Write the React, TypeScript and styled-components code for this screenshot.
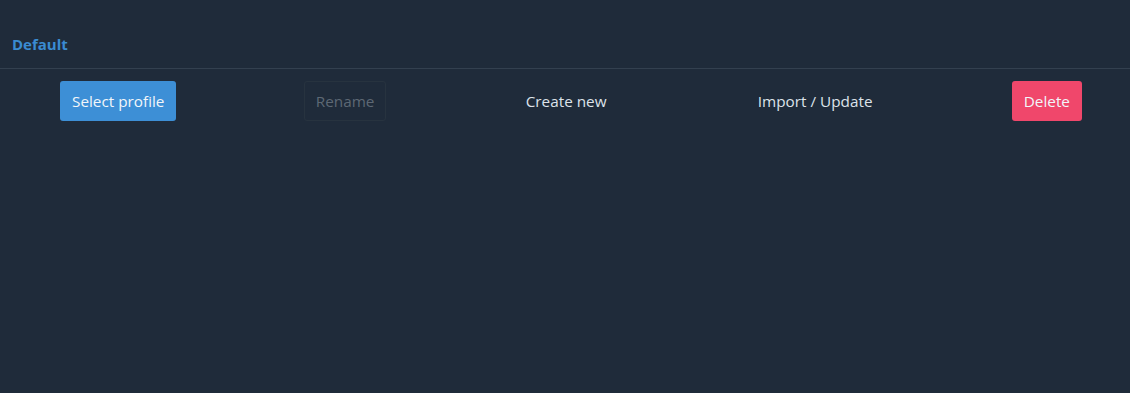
import React from "react";
import styled, { createGlobalStyle } from "styled-components";

const Global = createGlobalStyle`
  html, body { margin: 0; padding: 0; background: #1f2b3a; }
  body { font-family: "Open Sans", "Noto Sans", sans-serif; }
`;

const Page = styled.div`
  width: 1130px;
  height: 393px;
  background: #1f2b3a;
  display: flex;
  flex-direction: column;
`;

const Header = styled.div`
  height: 69px;
  box-sizing: border-box;
  border-bottom: 1px solid #33404f;
  display: flex;
  align-items: flex-end;
  padding: 0 0 15px 12px;
`;

const Title = styled.div`
  color: #3a8bd2;
  font-weight: 700;
  font-size: 15px;
  line-height: 18px;
`;

const Toolbar = styled.div`
  display: flex;
  justify-content: space-between;
  align-items: center;
  padding: 12px 48px 0 60px;
`;

type Variant = "primary" | "disabled" | "plain" | "danger";

const Button = styled.button<{ $variant: Variant }>`
  height: 40px;
  box-sizing: border-box;
  border-radius: 3px;
  font-family: "Open Sans", "Noto Sans", sans-serif;
  font-size: 15.3px;
  padding: 0 11px;
  cursor: pointer;
  border: 1px solid
    ${(p) => (p.$variant === "disabled" ? "#27333f" : "transparent")};
  background: ${(p) =>
    p.$variant === "primary"
      ? "#3d8fd6"
      : p.$variant === "danger"
      ? "#f0476b"
      : "transparent"};
  color: ${(p) =>
    p.$variant === "disabled"
      ? "#5d6874"
      : p.$variant === "plain"
      ? "#dde3ea"
      : "#f2f6fa"};
`;

export default function App() {
  return (
    <Page>
      <Global />
      <Header>
        <Title>Default</Title>
      </Header>
      <Toolbar>
        <Button $variant="primary">Select profile</Button>
        <Button $variant="disabled">Rename</Button>
        <Button $variant="plain">Create new</Button>
        <Button $variant="plain">Import / Update</Button>
        <Button $variant="danger">Delete</Button>
      </Toolbar>
    </Page>
  );
}
